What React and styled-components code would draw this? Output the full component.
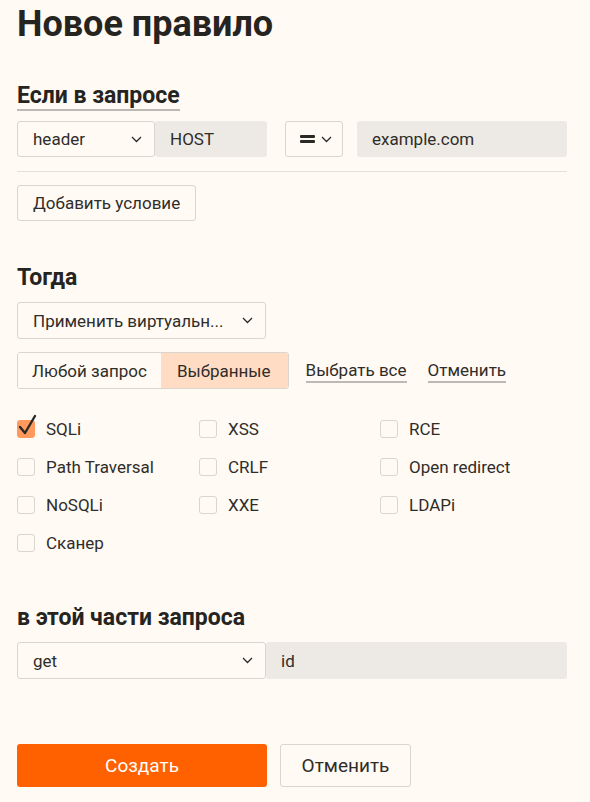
import styled, { createGlobalStyle, css } from "styled-components";

const GlobalStyle = createGlobalStyle`
  html, body {
    margin: 0;
    padding: 0;
    background: #fffaf4;
  }
  body {
    font-family: Roboto, "Noto Sans", sans-serif;
    color: #2f2d2a;
  }
`;

const Chevron = () => (
  <svg width="11" height="7" viewBox="0 0 11 7" fill="none">
    <path d="M1 1l4.5 4.5L10 1" stroke="#2b2926" strokeWidth="1.3" />
  </svg>
);

const EqualsIcon = () => (
  <svg width="15" height="10" viewBox="0 0 15 10">
    <rect x="0" y="1" width="15" height="3" rx="1" fill="#2b2926" />
    <rect x="0" y="6" width="15" height="3" rx="1" fill="#2b2926" />
  </svg>
);

const CheckIcon = () => (
  <svg width="22" height="24" viewBox="0 0 22 24" fill="none">
    <path d="M4 13l5 6L19 2" stroke="#2b2926" strokeWidth="2.4" strokeLinecap="round" strokeLinejoin="round" />
  </svg>
);

const attacks = [
  { name: "SQLi", checked: true },
  { name: "XSS" },
  { name: "RCE" },
  { name: "Path Traversal" },
  { name: "CRLF" },
  { name: "Open redirect" },
  { name: "NoSQLi" },
  { name: "XXE" },
  { name: "LDAPi" },
  { name: "Сканер" },
];

export default function App() {
  return (
    <>
      <GlobalStyle />
      <Page>
        <Title>Новое правило</Title>

        <SectionTitle $underline $mt="35px">Если в запросе</SectionTitle>
        <Row $mt="10px">
          <Select $w="138px">
            <span>header</span>
            <Chevron />
          </Select>
          <Input $w="112px">HOST</Input>
          <Select $w="58px" $ml="18px" $pad="0 10px 0 14px">
            <EqualsIcon />
            <Chevron />
          </Select>
          <Input $ml="14px">example.com</Input>
        </Row>
        <Divider />
        <Button $mt="13px">Добавить условие</Button>

        <SectionTitle $mt="44px">Тогда</SectionTitle>
        <Row $mt="11px" $h="37px">
          <Select $w="249px">
            <span>Применить виртуальн...</span>
            <Chevron />
          </Select>
        </Row>

        <Row $mt="13px" $h="37px">
          <Segmented>
            <Segment>Любой запрос</Segment>
            <Segment $active>Выбранные</Segment>
          </Segmented>
          <LinkText $ml="17px">Выбрать все</LinkText>
          <LinkText $ml="21px">Отменить</LinkText>
        </Row>

        <CheckGrid>
          {attacks.map((a) => (
            <CheckItem key={a.name}>
              <Box $checked={a.checked}>{a.checked && <CheckIcon />}</Box>
              {a.name}
            </CheckItem>
          ))}
        </CheckGrid>

        <SectionTitle $mt="52px">в этой части запроса</SectionTitle>
        <Row $mt="11px" $h="37px">
          <Select $w="249px">
            <span>get</span>
            <Chevron />
          </Select>
          <Input>id</Input>
        </Row>

        <Actions>
          <PrimaryButton>Создать</PrimaryButton>
          <Button $big>Отменить</Button>
        </Actions>
      </Page>
    </>
  );
}

const Page = styled.div`
  width: 550px;
  padding: 0 23px 40px 17px;
  display: flex;
  flex-direction: column;
  align-items: flex-start;
`;

const Title = styled.h1`
  margin: 0;
  font-size: 36px;
  line-height: 48px;
  font-weight: 700;
  color: #262421;
`;

const SectionTitle = styled.h2`
  margin: ${({ $mt }) => $mt || "0"} 0 0;
  font-size: 23px;
  line-height: 26px;
  font-weight: 700;
  color: #262421;
  ${({ $underline }) =>
    $underline &&
    css`
      border-bottom: 2px solid #bdbab5;
    `}
`;

const Row = styled.div`
  display: flex;
  align-items: stretch;
  width: 100%;
  height: ${({ $h }) => $h || "36px"};
  margin-top: ${({ $mt }) => $mt || "0"};
`;

const Select = styled.div`
  box-sizing: border-box;
  width: ${({ $w }) => $w};
  flex-shrink: 0;
  margin-left: ${({ $ml }) => $ml || "0"};
  padding: ${({ $pad }) => $pad || "0 12px 0 15px"};
  display: flex;
  align-items: center;
  justify-content: space-between;
  border: 1px solid #d9d5cf;
  border-radius: 3px;
  background: #fffaf4;
  font-size: 17px;
  white-space: nowrap;
`;

const Input = styled.div`
  box-sizing: border-box;
  ${({ $w }) =>
    $w
      ? css`
          width: ${$w};
          flex-shrink: 0;
        `
      : css`
          flex: 1;
        `}
  margin-left: ${({ $ml }) => $ml || "0"};
  padding: 0 15px;
  display: flex;
  align-items: center;
  background: #edeae5;
  border-radius: 3px;
  font-size: 17px;
`;

const Divider = styled.div`
  width: 100%;
  height: 1px;
  margin-top: 14px;
  background: #e4e0da;
`;

const Button = styled.button`
  box-sizing: border-box;
  margin-top: ${({ $mt }) => $mt || "0"};
  height: ${({ $big }) => ($big ? "43px" : "36px")};
  ${({ $big }) =>
    $big
      ? css`
          width: 131px;
          padding: 0;
        `
      : css`
          padding: 0 15px;
        `}
  border: 1px solid #d9d5cf;
  border-radius: 3px;
  background: #fffaf4;
  font-family: inherit;
  font-size: ${({ $big }) => ($big ? "19px" : "17px")};
  color: #2f2d2a;
  cursor: pointer;
`;

const Segmented = styled.div`
  display: flex;
  border: 1px solid #d9d5cf;
  border-radius: 3px;
  overflow: hidden;
`;

const Segment = styled.div`
  display: flex;
  align-items: center;
  padding: 0 ${({ $active }) => ($active ? "17px 0 16px" : "14px")};
  font-size: 17px;
  background: ${({ $active }) => ($active ? "#ffdcc3" : "#fffaf4")};
`;

const LinkText = styled.span`
  align-self: center;
  margin-left: ${({ $ml }) => $ml || "0"};
  margin-top: 2px;
  font-size: 17px;
  line-height: 21px;
  border-bottom: 2px solid #bdbab5;
`;

const CheckGrid = styled.div`
  margin-top: 30px;
  display: grid;
  grid-template-columns: 182px 181px 182px;
  grid-auto-rows: 20px;
  row-gap: 18px;
`;

const CheckItem = styled.label`
  display: flex;
  align-items: center;
  gap: 11px;
  font-size: 17px;
`;

const Box = styled.span`
  position: relative;
  box-sizing: border-box;
  width: 18px;
  height: 18px;
  flex-shrink: 0;
  border-radius: 3px;
  border: 1px solid ${({ $checked }) => ($checked ? "#ff9a5c" : "#d9d5cf")};
  background: ${({ $checked }) => ($checked ? "#ff9a5c" : "#fffaf4")};

  svg {
    position: absolute;
    left: -2px;
    top: -7px;
  }
`;

const Actions = styled.div`
  margin-top: 65px;
  display: flex;
  gap: 13px;
`;

const PrimaryButton = styled.button`
  width: 250px;
  height: 43px;
  border: none;
  border-radius: 3px;
  background: #ff6000;
  color: #fff;
  font-family: inherit;
  font-size: 19px;
  cursor: pointer;
`;
